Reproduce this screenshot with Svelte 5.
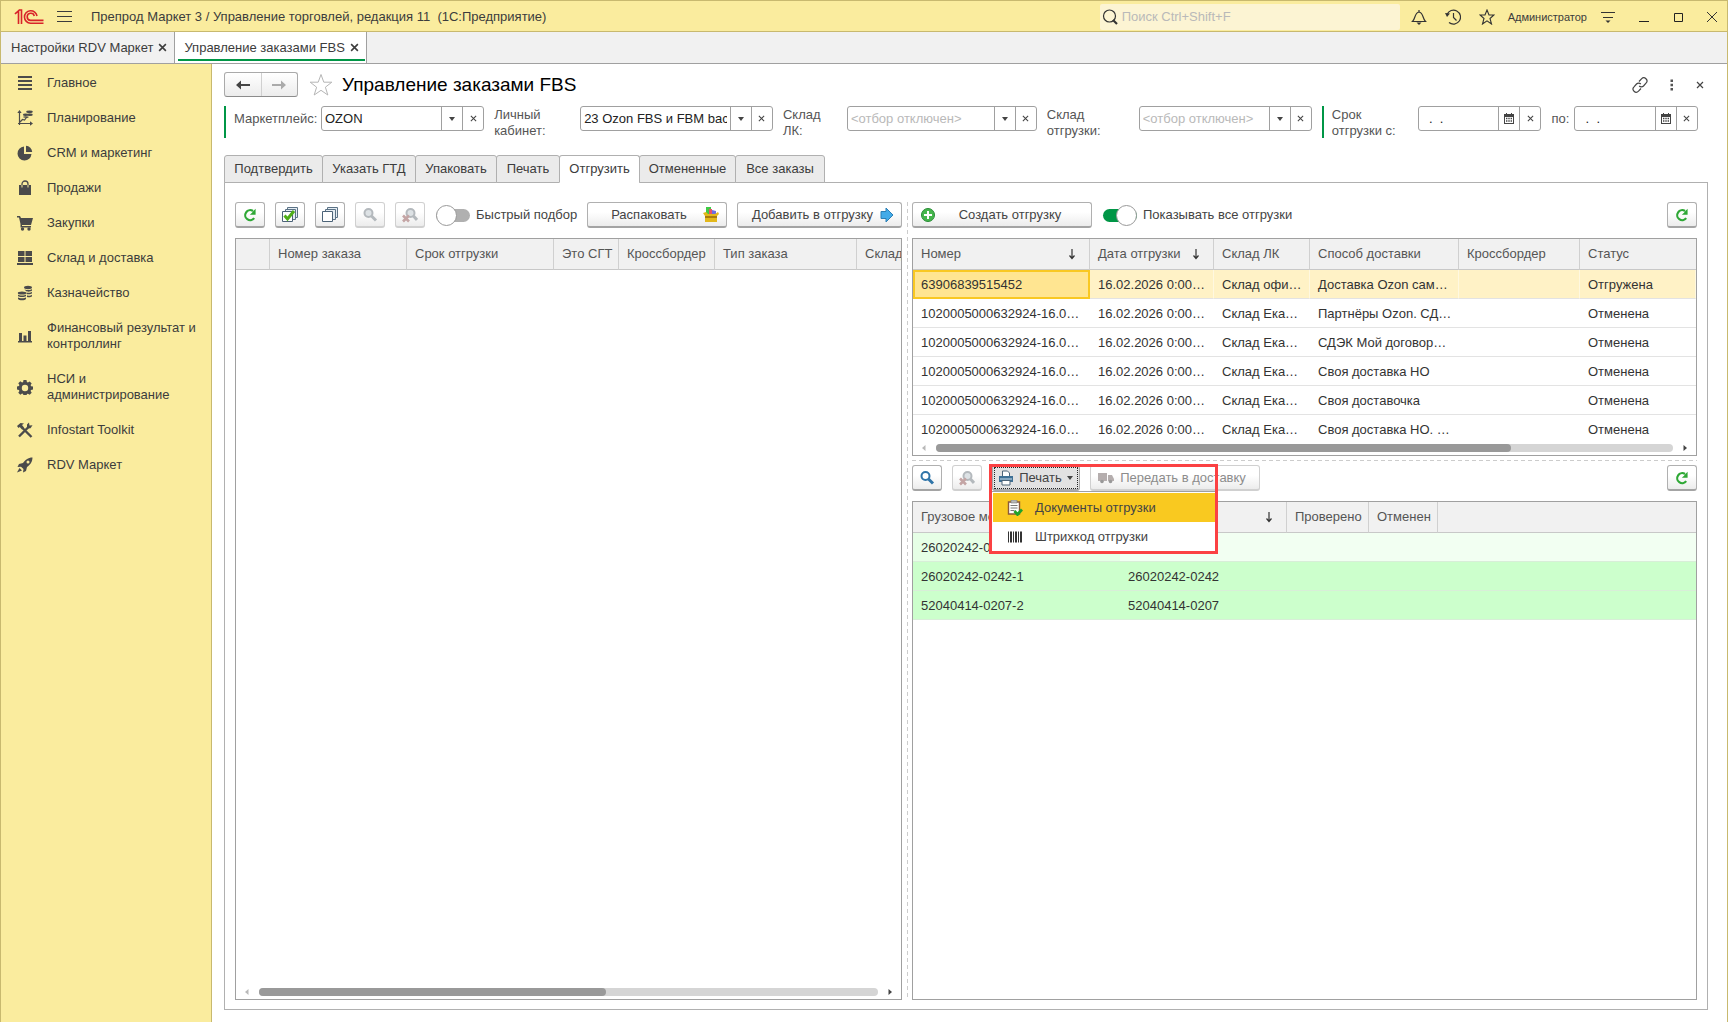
<script lang="ts">
  interface ISection {
    icon: string;
    title: string;
  }

  interface IColumn {
    title: string;
    width?: number;
    sort?: boolean;
  }

  const sections: ISection[] = [
    { icon: "list", title: "Главное" },
    { icon: "plan", title: "Планирование" },
    { icon: "pie", title: "CRM и маркетинг" },
    { icon: "bag", title: "Продажи" },
    { icon: "cart", title: "Закупки" },
    { icon: "store", title: "Склад и доставка" },
    { icon: "coins", title: "Казначейство" },
    { icon: "bars", title: "Финансовый результат и контроллинг" },
    { icon: "gear", title: "НСИ и администрирование" },
    { icon: "tools", title: "Infostart Toolkit" },
    { icon: "rocket", title: "RDV Маркет" },
  ];

  const pages = [
    { title: "Подтвердить", width: 99 },
    { title: "Указать ГТД", width: 94 },
    { title: "Упаковать", width: 82 },
    { title: "Печать", width: 64 },
    { title: "Отгрузить", width: 81 },
    { title: "Отмененные", width: 97 },
    { title: "Все заказы", width: 90 },
  ];

  const orderColumns: IColumn[] = [
    { title: "", width: 34 },
    { title: "Номер заказа", width: 137 },
    { title: "Срок отгрузки", width: 147 },
    { title: "Это СГТ", width: 65 },
    { title: "Кроссбордер", width: 96 },
    { title: "Тип заказа", width: 142 },
    { title: "Склад", width: 140 },
  ];

  const shipmentColumns: IColumn[] = [
    { title: "Номер", width: 177, sort: true },
    { title: "Дата отгрузки", width: 124, sort: true },
    { title: "Склад ЛК", width: 96 },
    { title: "Способ доставки", width: 149 },
    { title: "Кроссбордер", width: 121 },
    { title: "Статус" },
  ];

  const longNumber = "1020005000632924-16.0…";
  const date = "16.02.2026 0:00…";
  const shipments = [
    ["63906839515452", date, "Склад офи…", "Доставка Ozon сам…", "", "Отгружена"],
    [longNumber, date, "Склад Ека…", "Партнёры Ozon. СД…", "", "Отменена"],
    [longNumber, date, "Склад Ека…", "СДЭК Мой договор…", "", "Отменена"],
    [longNumber, date, "Склад Ека…", "Своя доставка НО", "", "Отменена"],
    [longNumber, date, "Склад Ека…", "Своя доставочка", "", "Отменена"],
    [longNumber, date, "Склад Ека…", "Своя доставка НО. …", "", "Отменена"],
  ];

  const cargoColumns: IColumn[] = [
    { title: "Грузовое место", width: 207 },
    { title: "", width: 167, sort: true },
    { title: "Проверено", width: 82 },
    { title: "Отменен", width: 69 },
    { title: "" },
  ];

  const cargo = [
    ["26020242-0242", "", "", "", ""],
    ["26020242-0242-1", "26020242-0242", "", "", ""],
    ["52040414-0207-2", "52040414-0207", "", "", ""],
  ];

  let activePage = $state("Отгрузить");
  let quickPick = $state(false);
  let showAll = $state(true);
  let menuOpen = $state(true);
  let marketplace = $state("OZON");
  let account = $state("23 Ozon FBS и FBM backup");
  let accountWarehouse = $state("");
  let shipWarehouse = $state("");
  let dateFrom = $state("  .  .");
  let dateTo = $state("  .  .");
</script>

{#snippet cross(size: number)}
  <svg width={size} height={size} viewBox="0 0 8 8"><path d="M1 1l6 6M7 1L1 7" fill="none" stroke="currentColor" stroke-width={size > 8 ? 1.4 : 1.2} /></svg>
{/snippet}

{#snippet refresh()}
  <svg width="16" height="16" viewBox="0 0 16 16">
    <path d="M12.2 11.2A5 5 0 1 1 11 4" fill="none" stroke="#2fa836" stroke-width="2.2" />
    <path d="M13.6 1.8v6H7.8l2.2-2.1 1.6-2z" fill="#2fa836" />
  </svg>
{/snippet}

{#snippet magnifier(color: string, cancel: boolean)}
  <svg width="16" height="16" viewBox="0 0 16 16">
    <circle cx={cancel ? 8.5 : 6.5} cy="6" r="4" fill={color === "#b4b9bd" ? "#dde2e5" : "#fff"} stroke={color} stroke-width="2" />
    <path d={cancel ? "M11.5 9l3.5 4" : "M9.5 9l4.5 4.5"} stroke={color} stroke-width="3" />
    {#if cancel}
      <path d="M1 8.500l6 6M7 8.500l-6 6" stroke="#c4a5a5" stroke-width="2.6" />
    {/if}
  </svg>
{/snippet}

{#snippet sectionIcon(name: string)}
  <svg class="section_icon" width="16" height="16" viewBox="0 0 16 16" fill="#4b4b4b">
    {#if name === "list"}
      <path d="M1 1h14v2H1zM1 5h14v2H1zM1 9h14v2H1zM1 13h14v2H1z" />
    {:else if name === "plan"}
      <path d="M2.500 15V2M1 13.500h13M3 12l2.500-2.500 2 .5 2-2.500 2-.5" fill="none" stroke="#4b4b4b" stroke-width="1.200" />
      <path d="M2.500 0l2.200 3H.3zM16 13.500l-3 2.200v-4.400z" />
      <ellipse cx="12.500" cy="1.800" rx="3.300" ry="1.400" />
      <ellipse cx="12.800" cy="4.800" rx="3" ry="1.200" />
      <ellipse cx="8.500" cy="4.800" rx="2.600" ry="1.200" />
      <ellipse cx="8.500" cy="7" rx="2.400" ry=".8" />
    {:else if name === "pie"}
      <path d="M7 1.500V9h7.500A7 7 0 1 1 7 1.500z" />
      <path d="M9 .8A6.500 6.500 0 0 1 15.200 7H9z" />
    {:else if name === "bag"}
      <path d="M2 5h12v10H2z" />
      <path d="M5 8V4a3 3 0 0 1 6 0v4" fill="none" stroke="#4b4b4b" stroke-width="1.300" />
      <path d="M5 5v2.500M11 5v2.500" stroke="#faec9e" stroke-width="1" />
    {:else if name === "cart"}
      <path d="M0 1h3l1 2h12l-2 7H5v1h9v1.500H3.500V9L2 2.500H0z" />
      <circle cx="5.500" cy="14" r="1.700" />
      <circle cx="12" cy="14" r="1.700" />
    {:else if name === "store"}
      <path d="M1 1h6.500v5H1zM8.500 1H15v5H8.500zM1 7h6.500v5H1zM8.500 7H15v5H8.500zM0 13h16v2H0z" />
    {:else if name === "coins"}
      <ellipse cx="11" cy="2.500" rx="4" ry="1.700" />
      <path d="M7 4c1 1.400 7 1.400 8 0v1.500c-1 1.400-5 1.400-6 .6zM9.500 7.500c2 .6 4.500.3 5.500-.7v1.500c-1 1-3.500 1.200-5.500.8zM10 10.500c2 .4 4 0 5-.8v1.500c-1 1-3 1.200-5 .8z" />
      <ellipse cx="5" cy="8" rx="4.200" ry="1.500" />
      <path d="M1 9.500c1 1.400 7 1.400 8 0V11c-1 1.400-7 1.400-8 0zM1 12.300c1 1.400 7 1.400 8 0v1.600c-1 1.800-7 1.800-8 0z" />
    {:else if name === "bars"}
      <path d="M1 13h14v1.500H1zM2 5h3v8H2zM6.500 7.500h3V13h-3zM11 3h3v10h-3z" />
    {:else if name === "gear"}
      <path fill-rule="evenodd" d="M6.500 1h3l.4 2 1 .5 1.800-1.100 2 2-1.100 1.700.5 1.100 1.900.4v3l-2 .4-.4 1 1.100 1.800-2 2-1.800-1.100-1 .4-.4 1.900h-3l-.4-2-1-.4-1.800 1.100-2-2L2.400 12l-.5-1L0 10.500v-3l2-.4.4-1-1.100-1.800 2-2L5.100 3.500l1-.5zM8 5.800a3.200 3.200 0 1 0 0 6.400 3.200 3.200 0 0 0 0-6.400z" />
    {:else if name === "tools"}
      <path d="M2 14.500l9.500-9.500M5.500 6l9 9" stroke="#4b4b4b" stroke-width="2.400" />
      <path d="M10 2.500l2-2 .5 3 3-.3-2 3-3.500.3zM0 4l3.500-3 3.500.5-2 1.500 2 2.500-2 2-2.300-2.500L1.500 6z" />
    {:else}
      <path d="M15.500.5C11 .5 8 3 6 6L2 7 .5 10l3.500-.3L6.500 12 6 15.500 9 14l1-4c3-2 5.500-5 5.500-9.500z" />
      <path d="M0 15.500L2.500 11 5 13.500z" />
      <circle cx="11" cy="5" r="1.500" fill="#faec9e" />
    {/if}
  </svg>
{/snippet}

{#snippet headCells(columns: IColumn[])}
  <colgroup>
    {#each columns as column}
      <col style={column.width ? `width: ${column.width}px` : ""} />
    {/each}
  </colgroup>
  <thead>
    <tr>
      {#each columns as column}
        <th>
          <div class="head">
            <span>{column.title}</span>
            {#if column.sort}
              <svg width="8" height="12" viewBox="0 0 8 12"><path d="M4 1v9M1.500 7.500L4 10.500l2.500-3" fill="none" stroke="#333" stroke-width="1.200" /></svg>
            {/if}
          </div>
        </th>
      {/each}
    </tr>
  </thead>
{/snippet}

{#snippet scrollbar(part: number)}
  <div class="scroll">
    <svg width="5" height="8" viewBox="0 0 5 8"><path d="M4.500 1v6L1 4z" fill="#b9b9b9" /></svg>
    <div class="scroll_track"><div class="scroll_thumb" style="width: {part}%"></div></div>
    <svg width="5" height="8" viewBox="0 0 5 8"><path d="M.5 1v6L4 4z" fill="#444" /></svg>
  </div>
{/snippet}

{#snippet comboButtons(name: string)}
  <button aria-label="Выбрать: {name}">
    <svg width="6" height="4" viewBox="0 0 6 4"><path d="M0 0h6L3 4z" fill="#444" /></svg>
  </button>
  <button aria-label="Очистить: {name}">{@render cross(7)}</button>
{/snippet}

{#snippet dateButtons(name: string)}
  <button aria-label="Календарь: {name}">
    <svg width="10" height="11" viewBox="0 0 10 11">
      <path fill="#444" fill-rule="evenodd" d="M0 1h2V0h1v1h4V0h1v1h2v10H0zM1 4v6h8V4z" />
      <path d="M2 5.500h6M2 8h6" stroke="#444" stroke-width="1.300" stroke-dasharray="1.400 .9" />
    </svg>
  </button>
  <button aria-label="Очистить: {name}">{@render cross(7)}</button>
{/snippet}

<div class="app">
  <header class="titlebar">
    <svg class="logo" width="30" height="16" viewBox="0 0 30 16" fill="none" stroke="#d8232a" stroke-width="1.600">
      <path d="M1 5l3.500-3.200V15M7.500 15V1H5.500L1 4.800" />
      <path d="M23 7A6.300 6.300 0 1 0 16.500 14.300H29.500M20.300 7A3.600 3.600 0 1 0 16.500 11.400H29.500" />
    </svg>
    <button class="plain menuButton" aria-label="Меню">
      <svg width="15" height="13" viewBox="0 0 15 13"><path d="M0 1.500h15M0 6.500h15M0 11.500h15" stroke="#3c3c3c" /></svg>
    </button>
    <span class="appTitle">Препрод Маркет 3 / Управление торговлей, редакция 11&nbsp; (1С:Предприятие)</span>
    <label class="search">
      <svg width="16" height="16" viewBox="0 0 16 16"><circle cx="7.500" cy="7" r="6" fill="none" stroke="#333" stroke-width="1.200" /><path d="M11 11l4 4" stroke="#333" stroke-width="2.200" /></svg>
      <input type="text" placeholder="Поиск Ctrl+Shift+F" />
    </label>
    <div class="tools">
      <button class="plain" aria-label="Уведомления">
        <svg width="16" height="16" viewBox="0 0 16 16"><path d="M1.500 12.500c3-2.500 2-9 6.500-9.500 4.500.5 3.500 7 6.500 9.500zM8 3V1" fill="none" stroke="#333" stroke-width="1.200" /><path d="M5.500 13.500h5L8 16z" fill="#333" /></svg>
      </button>
      <button class="plain" aria-label="История">
        <svg width="16" height="16" viewBox="0 0 16 16"><path d="M2 5.500A7 7 0 1 1 4 13.500M8.500 4v4.500l3 3" fill="none" stroke="#333" stroke-width="1.200" /><path d="M0 4l5 .5L2 8z" fill="#333" /></svg>
      </button>
      <button class="plain" aria-label="Избранное">
        <svg width="16" height="16" viewBox="0 0 16 16"><path d="M8 1l2 5h5l-4 3.500 1.500 5.500L8 11.800 3.500 15 5 9.500 1 6h5z" fill="none" stroke="#333" stroke-width="1.100" /></svg>
      </button>
    </div>
    <span class="user">Администратор</span>
    <div class="windowButtons">
      <button class="plain" aria-label="Настройки">
        <svg width="14" height="14" viewBox="0 0 14 14"><path d="M0 2.500h14M2 7.500h10" stroke="#333" stroke-width="1.200" /><path d="M4.500 10.500h5L7 13z" fill="#333" /></svg>
      </button>
      <button class="plain" aria-label="Свернуть">
        <svg width="10" height="10" viewBox="0 0 10 10"><path d="M0 9.500h10" stroke="#222" /></svg>
      </button>
      <button class="plain" aria-label="Развернуть">
        <svg width="10" height="10" viewBox="0 0 10 10"><path d="M1.500 1.500h8v8h-8z" fill="none" stroke="#222" /></svg>
      </button>
      <button class="plain" aria-label="Закрыть">
        <svg width="10" height="10" viewBox="0 0 10 10"><path d="M0 0l10 10M10 0L0 10" stroke="#333" /></svg>
      </button>
    </div>
  </header>

  <div class="windowTabs">
    <div class="windowTab">
      <span>Настройки RDV Маркет</span>
      <button class="plain" aria-label="Закрыть вкладку">{@render cross(9)}</button>
    </div>
    <div class="windowTab current">
      <span>Управление заказами FBS</span>
      <button class="plain" aria-label="Закрыть вкладку">{@render cross(9)}</button>
    </div>
  </div>

  <div class="body">
    <nav class="sidebar">
      {#each sections as section}
        <a class="section" href="#{section.icon}">
          {@render sectionIcon(section.icon)}
          <span>{section.title}</span>
        </a>
      {/each}
    </nav>

    <main class="form">
      <div class="formHeader">
        <div class="history">
          <button aria-label="Назад">
            <svg width="14" height="10" viewBox="0 0 14 10"><path d="M0 5l5-4.500V4h9v2H5v3.500z" fill="#444" /></svg>
          </button>
          <button aria-label="Вперед">
            <svg width="14" height="10" viewBox="0 0 14 10"><path d="M14 5L9 .5V4H0v2h9v3.500z" fill="#aaa" /></svg>
          </button>
        </div>
        <svg class="star" width="24" height="24" viewBox="0 0 24 24"><path d="M12 1.500l2.800 7.700h8l-6.400 5 2.400 7.800-6.800-4.700L5.200 22l2.400-7.800-6.400-5h8z" fill="none" stroke="#b5b5b5" /></svg>
        <h1>Управление заказами FBS</h1>
        <div class="formTools">
          <button class="plain" aria-label="Ссылка">
            <svg width="16" height="16" viewBox="0 0 16 16"><path d="M7 4.500l2.500-2.700a3 3 0 0 1 4.500 4.400L11.500 9a3 3 0 0 1-4.300 0M9 11.500l-2.500 2.700A3 3 0 0 1 2 9.800L4.500 7a3 3 0 0 1 4.300 0" fill="none" stroke="#444" stroke-width="1.200" /></svg>
          </button>
          <button class="plain" aria-label="Еще">
            <svg width="4" height="12" viewBox="0 0 4 12"><path d="M.5 .5h2.500v2.500H.5zM.5 4.800h2.500v2.500H.5zM.5 9h2.500v2.500H.5z" fill="#555" /></svg>
          </button>
          <button class="plain" aria-label="Закрыть">{@render cross(8)}</button>
        </div>
      </div>

      <div class="filters">
        <label class="marked market" for="market">Маркетплейс:</label>
        <div class="field field_market">
          <input id="market" type="text" bind:value={marketplace} />
          {@render comboButtons("Маркетплейс")}
        </div>
        <label class="twoLines account" for="account">Личный кабинет:</label>
        <div class="field field_account">
          <input id="account" type="text" bind:value={account} />
          {@render comboButtons("Личный кабинет")}
        </div>
        <label class="twoLines warehouse" for="warehouse">Склад ЛК:</label>
        <div class="field field_warehouse">
          <input id="warehouse" type="text" placeholder="<отбор отключен>" bind:value={accountWarehouse} />
          {@render comboButtons("Склад ЛК")}
        </div>
        <label class="twoLines ship" for="ship">Склад отгрузки:</label>
        <div class="field field_ship">
          <input id="ship" type="text" placeholder="<отбор отключен>" bind:value={shipWarehouse} />
          {@render comboButtons("Склад отгрузки")}
        </div>
        <label class="twoLines marked from" for="from">Срок отгрузки с:</label>
        <div class="field field_date">
          <input id="from" type="text" bind:value={dateFrom} />
          {@render dateButtons("Срок отгрузки с")}
        </div>
        <label class="to" for="to">по:</label>
        <div class="field field_date">
          <input id="to" type="text" bind:value={dateTo} />
          {@render dateButtons("по")}
        </div>
      </div>

      <div class="pages">
        {#each pages as page}
          <button
            class={page.title === activePage ? "page active" : "page"}
            style="width: {page.width}px"
            onclick={() => (activePage = page.title)}
          >
            {page.title}
          </button>
        {/each}
      </div>

      <div class="panel">
        <section class="pane">
          <div class="toolbar">
            <button class="btn square" aria-label="Обновить">{@render refresh()}</button>
            <button class="btn square" aria-label="Отметить все">
              <svg width="16" height="16" viewBox="0 0 16 16">
                <path d="M5.500 3V.5h10v10H13M3.500 5V2.500h10v10H11" fill="#e5edf3" stroke="#5b7286" />
                <path d="M.5 4.500h10v10H.5z" fill="#fff" stroke="#4c6378" />
                <path d="M2.500 8.500l3 3.500 6.500-8" fill="none" stroke="#4fae17" stroke-width="3" />
              </svg>
            </button>
            <button class="btn square" aria-label="Снять отметки">
              <svg width="16" height="16" viewBox="0 0 16 16">
                <path d="M5.500 3V.5h10v10H13M3.500 5V2.500h10v10H11" fill="#e5edf3" stroke="#5b7286" />
                <path d="M.5 4.500h10v10H.5z" fill="#fff" stroke="#4c6378" />
              </svg>
            </button>
            <button class="btn square" disabled aria-label="Найти">{@render magnifier("#b4b9bd", false)}</button>
            <button class="btn square" disabled aria-label="Отменить поиск">{@render magnifier("#b4b9bd", true)}</button>
            <label class="switch grow">
              <input type="checkbox" bind:checked={quickPick} />
              <span>Быстрый подбор</span>
            </label>
            <button class="btn unpack">
              <span>Распаковать</span>
              <svg width="16" height="16" viewBox="0 0 16 16">
                <path d="M3 0h5v7H3z" fill="#3fca45" /><path d="M6 2h3v6H6z" fill="#e5536b" /><path d="M9 3l4 1v4H9z" fill="#6d6ee0" />
                <path d="M0 6l3-1 2 2h7l3-2 1 2-2 2v6H2V9z" fill="#e3b81b" /><path d="M2 9h12v2H2z" fill="#a97b0c" />
              </svg>
            </button>
            <button class="btn add">
              <span>Добавить в отгрузку</span>
              <svg width="14" height="16" viewBox="0 0 14 16"><path d="M1 4.500h5V1l7 7-7 7v-3.500H1z" fill="#43abe8" stroke="#2b7fb5" /></svg>
            </button>
          </div>
          <div class="grid">
            <table class="orders">
              {@render headCells(orderColumns)}
              <tbody></tbody>
            </table>
            <div class="space"></div>
            {@render scrollbar(56)}
          </div>
        </section>

        <div class="splitter"></div>

        <section class="pane">
          <div class="toolbar">
            <button class="btn create">
              <svg width="16" height="16" viewBox="0 0 16 16"><circle cx="8" cy="8" r="6.500" fill="#45b64c" stroke="#278c35" /><path d="M8 4v8M4 8h8" stroke="#fff" stroke-width="2" /></svg>
              <span>Создать отгрузку</span>
            </button>
            <label class="switch grow">
              <input type="checkbox" bind:checked={showAll} />
              <span>Показывать все отгрузки</span>
            </label>
            <button class="btn square" aria-label="Обновить отгрузки">{@render refresh()}</button>
          </div>
          <div class="grid shipments">
            <table>
              {@render headCells(shipmentColumns)}
              <tbody>
                {#each shipments as row, index (index)}
                  <tr class={index === 0 ? "selected" : ""}>
                    {#each row as cell}
                      <td>{cell}</td>
                    {/each}
                  </tr>
                {/each}
              </tbody>
            </table>
            {@render scrollbar(78)}
          </div>
          <div class="rowSplitter"></div>
          <div class="toolbar">
            <button class="btn square" aria-label="Найти место">{@render magnifier("#2f74a8", false)}</button>
            <button class="btn square" disabled aria-label="Отменить поиск места">{@render magnifier("#b4b9bd", true)}</button>
            <div class="print">
              <button class="btn pressed" onclick={() => (menuOpen = !menuOpen)}>
                <svg width="16" height="16" viewBox="0 0 16 16">
                  <path d="M4.500 7V1h5l2 2v4" fill="#fff" stroke="#4d6478" />
                  <path d="M1 6h14v6H1z" fill="#3e7095" /><path d="M2 9h12" stroke="#cfe0ec" />
                  <path d="M4 10.500h8V15H4z" fill="#fff" stroke="#4d6478" />
                </svg>
                <span>Печать</span>
                <svg width="6" height="4" viewBox="0 0 6 4"><path d="M0 0h6L3 4z" fill="#444" /></svg>
              </button>
              {#if menuOpen}
                <div class="menu">
                  <button class="menuItem hovered">
                    <svg width="16" height="16" viewBox="0 0 16 16">
                      <path d="M1.500 2h11v12h-11z" fill="#fff" stroke="#8a5a3c" stroke-width="1.400" /><path d="M4 0h6v3H4z" fill="#b9b9b9" stroke="#777" stroke-width=".6" />
                      <path d="M3.500 5.500h7M3.500 8h7M3.500 10.500h4" stroke="#777" /><path d="M7.500 11l3 3.500L15 9.500" fill="none" stroke="#1fa32b" stroke-width="2.800" />
                    </svg>
                    <span>Документы отгрузки</span>
                  </button>
                  <button class="menuItem">
                    <svg width="16" height="16" viewBox="0 0 16 16"><path d="M1 2.500h1v11H1zM3 2.500h2v11H3zM6 2.500h1v11H6zM8 2.500h2v11H8zM11 2.500h1v11h-1zM13 2.500h2v11h-2z" fill="#333" /></svg>
                    <span>Штрихкод отгрузки</span>
                  </button>
                </div>
                <div class="highlight"></div>
              {/if}
            </div>
            <button class="btn deliver" disabled>
              <svg width="16" height="16" viewBox="0 0 16 16"><path d="M0 3h9v8H0zM10 5h4l2 4v2h-6z" fill="#b5aeae" /><circle cx="4" cy="11.500" r="1.800" fill="#999" /><circle cx="12.500" cy="11.500" r="1.800" fill="#999" /></svg>
              <span>Передать в доставку</span>
            </button>
            <div class="grow"></div>
            <button class="btn square" aria-label="Обновить места">{@render refresh()}</button>
          </div>
          <div class="grid">
            <table class="cargo">
              {@render headCells(cargoColumns)}
              <tbody>
                {#each cargo as row, index (index)}
                  <tr class={index === 0 ? "currentRow" : ""}>
                    {#each row as cell}
                      <td>{cell}</td>
                    {/each}
                  </tr>
                {/each}
              </tbody>
            </table>
          </div>
        </section>
      </div>
    </main>
  </div>
</div>

<style>
  :global(body) {
    background: #fff;
  }

  .app {
    display: flex;
    flex-direction: column;
    min-height: 100vh;
    box-sizing: border-box;
    border: 1px solid #c8b96f;
    border-bottom: none;
    font: 13px/16px "Liberation Sans", Arial, sans-serif;
    color: #3c3c3c;
  }

  .app :global(*) {
    box-sizing: border-box;
  }

  button,
  input {
    font: inherit;
    color: inherit;
  }

  svg {
    display: block;
    flex: none;
  }

  .plain {
    display: flex;
    align-items: center;
    justify-content: center;
    padding: 0;
    border: none;
    background: none;
    cursor: pointer;
  }

  .titlebar {
    display: flex;
    align-items: center;
    height: 31px;
    padding: 1px 10px 0 13px;
    border-bottom: 1px solid #c8b96f;
    background: #faec9e;
  }

  .menuButton {
    margin: 0 19px 0 13px;
  }

  .appTitle {
    flex: 1;
    white-space: nowrap;
  }

  .search {
    display: flex;
    align-items: center;
    gap: 4px;
    width: 300px;
    height: 26px;
    padding: 0 2px;
    border-radius: 2px;
    background: #fcf4d3;
  }

  .search input {
    flex: 1;
    min-width: 0;
    padding: 0;
    border: none;
    outline: none;
    background: none;
  }

  input::placeholder {
    color: #b9b9b9;
    opacity: 1;
  }

  .tools {
    display: flex;
    gap: 18px;
    margin: 0 13px 0 11px;
  }

  .user {
    font-size: 11px;
  }

  .windowButtons {
    display: flex;
    align-items: center;
    gap: 24px;
    margin-left: 14px;
  }

  .windowTabs {
    display: flex;
    height: 32px;
    border-bottom: 1px solid #a0a0a0;
    background: #f1f1f1;
  }

  .windowTab {
    display: flex;
    align-items: center;
    gap: 5px;
    padding: 0 7px 0 10px;
    border-right: 1px solid #a0a0a0;
    white-space: nowrap;
  }

  .current {
    padding: 0 7px 0 6px;
    border-left: 3px solid #fff;
    background: linear-gradient(#009646, #009646) 0 27px / 187px 2px no-repeat #fff;
  }

  .body {
    display: flex;
    flex: 1;
  }

  .sidebar {
    flex: none;
    width: 211px;
    padding-top: 2px;
    border-right: 1px solid #c8b96f;
    background: #faec9e;
  }

  .section {
    display: flex;
    align-items: center;
    gap: 14px;
    padding: 9px 12px 10px 16px;
    color: #3c3c3c;
    text-decoration: none;
  }

  .form {
    display: flex;
    flex-direction: column;
    flex: 1;
    min-width: 0;
    padding: 8px 19px 12px 12px;
  }

  .formHeader {
    display: flex;
    align-items: center;
    height: 25px;
    padding-right: 4px;
  }

  .history {
    display: flex;
    width: 74px;
    height: 25px;
    border: 1px solid #aaa;
    border-bottom-color: #8c8c8c;
    border-radius: 3px;
    background: linear-gradient(#fff, #ececec);
  }

  .history button {
    display: flex;
    flex: 1;
    align-items: center;
    justify-content: center;
    border: none;
    background: none;
  }

  .history button + button {
    border-left: 1px solid #d0d0d0;
  }

  .star {
    margin: 0 9px 0 11px;
  }

  h1 {
    flex: 1;
    margin: 0;
    font-size: 19px;
    line-height: 24px;
    font-weight: normal;
    color: #000;
  }

  .formTools {
    display: flex;
    align-items: center;
    gap: 22px;
    color: #444;
  }

  .filters {
    display: flex;
    align-items: flex-start;
    margin-top: 9px;
    padding-right: 10px;
    color: #555;
  }

  .filters label {
    flex: none;
    padding: 5px 0 0 10px;
  }

  .filters .twoLines {
    height: 32px;
    padding-top: 1px;
  }

  .filters .marked {
    height: 32px;
    border-left: 2px solid #009646;
    padding-left: 8px;
  }

  .filters .market {
    width: 97px;
  }

  .filters .account {
    width: 96px;
    padding-right: 30px;
  }

  .filters .warehouse {
    width: 74px;
    padding-right: 20px;
  }

  .filters .ship {
    width: 102px;
    padding-right: 20px;
  }

  .filters .from {
    width: 96px;
    margin-left: 10px;
    padding-right: 20px;
  }

  .filters .to {
    width: 33px;
  }

  .field {
    display: flex;
    height: 25px;
    min-width: 0;
    border: 1px solid #a0a0a0;
    border-radius: 3px;
    background: #fff;
  }

  .field input {
    flex: 1;
    width: 0;
    min-width: 0;
    margin-right: 3px;
    padding: 0 0 0 3px;
    border: none;
    outline: none;
    background: none;
    color: #222;
  }

  .field button {
    display: flex;
    align-items: center;
    justify-content: center;
    flex: none;
    width: 21px;
    padding: 0;
    border: none;
    border-left: 1px solid #a0a0a0;
    background: none;
    color: #444;
  }

  .field_market {
    flex: 163 1 0;
  }

  .field_account {
    flex: 193 1 0;
  }

  .field_warehouse {
    flex: 190 1 0;
  }

  .field_ship {
    flex: 173 1 0;
  }

  .field_date {
    flex: 123 1 0;
  }

  .pages {
    display: flex;
    position: relative;
    margin-top: 17px;
  }

  .page {
    height: 28px;
    margin-right: -1px;
    padding: 0;
    border: 1px solid #b0b0b0;
    border-radius: 3px 3px 0 0;
    background: #ebebeb;
    white-space: nowrap;
  }

  .active {
    border-bottom-color: #fff;
    background: #fff;
  }

  .panel {
    display: grid;
    flex: 1;
    grid-template-columns: minmax(0, 667fr) 10px minmax(0, 785fr);
    margin-top: -1px;
    padding: 19px 10px 9px;
    border: 1px solid #b0b0b0;
  }

  .pane {
    display: flex;
    flex-direction: column;
    min-width: 0;
  }

  .splitter {
    width: 1px;
    margin: 0 auto;
    background: repeating-linear-gradient(#ccc 0 4px, #fff 4px 7px);
  }

  .rowSplitter {
    height: 1px;
    margin: 4px 0;
    background: repeating-linear-gradient(90deg, #ccc 0 4px, #fff 4px 7px);
  }

  .toolbar {
    display: flex;
    align-items: center;
    gap: 10px;
    height: 26px;
    margin-bottom: 10px;
    color: #444;
  }

  .btn {
    display: flex;
    align-items: center;
    justify-content: center;
    flex: none;
    height: 26px;
    padding: 0 7px;
    border: 1px solid #b0b0b0;
    border-bottom: 2px solid #a4a4a4;
    border-radius: 3px;
    background: linear-gradient(#fff 40%, #ececec);
    white-space: nowrap;
  }

  .btn span {
    flex: 1;
    text-align: center;
  }

  .btn:disabled {
    border-color: #d0d0d0;
    color: #8c8c8c;
  }

  .square {
    width: 30px;
    padding: 0;
  }

  .unpack {
    width: 140px;
  }

  .add {
    width: 165px;
  }

  .create {
    width: 180px;
  }

  .deliver {
    width: 170px;
  }

  .grow {
    flex: 1;
  }

  .switch {
    display: flex;
    align-items: center;
    gap: 6px;
    min-width: 0;
    white-space: nowrap;
  }

  .switch input {
    display: flex;
    align-items: center;
    appearance: none;
    flex: none;
    width: 34px;
    height: 13px;
    margin: 0 0 0 1px;
    border-radius: 7px;
    background: #b0b0b0;
  }

  .switch input::before {
    content: "";
    width: 19px;
    height: 19px;
    flex: none;
    border: 1px solid #999;
    border-radius: 50%;
    background: #fff;
  }

  .switch input:checked {
    justify-content: flex-end;
    background: #009646;
  }

  .grid {
    display: flex;
    flex: 1;
    flex-direction: column;
    overflow: hidden;
    border: 1px solid #a0a0a0;
    background: #fff;
  }

  .shipments {
    flex: none;
  }

  .space {
    flex: 1;
  }

  table {
    width: 100%;
    table-layout: fixed;
    border-collapse: separate;
    border-spacing: 0;
  }

  .orders {
    width: 761px;
  }

  th {
    height: 31px;
    padding: 0 7px 0 8px;
    border-right: 1px solid #d0d0d0;
    border-bottom: 1px solid #c8c8c8;
    background: #f1f1f1;
    font-weight: normal;
    color: #555;
    text-align: left;
  }

  th:last-child {
    border-right: none;
  }

  .head {
    display: flex;
    align-items: center;
    white-space: nowrap;
  }

  .head span {
    flex: 1;
  }

  .head svg {
    margin-right: 6px;
  }

  td {
    height: 29px;
    padding: 1px 2px 0 8px;
    overflow: hidden;
    border-bottom: 1px solid #e3e3e3;
    color: #333;
    text-overflow: ellipsis;
    white-space: nowrap;
  }

  .shipments tr:last-child td {
    border-bottom-color: transparent;
  }

  .selected td {
    border-right: 1px solid #fff8e0;
    background: #fff2c6;
  }

  .selected td:first-child {
    padding: 0 2px 0 6px;
    border: 2px solid #f9c822;
    background: #ffe591;
  }

  .cargo td {
    border-bottom-color: #d8eed8;
    background: #ccffcc;
  }

  .cargo .currentRow td {
    background: #f2fff2;
  }

  .cargo .currentRow td:first-child {
    background: #e6ffe6;
  }

  .scroll {
    display: flex;
    align-items: center;
    gap: 10px;
    height: 11px;
    padding: 0 8px 3px;
  }

  .scroll_track {
    flex: 1;
    height: 8px;
    border-radius: 4px;
    background: #d5d5d5;
  }

  .scroll_thumb {
    height: 8px;
    border-radius: 4px;
    background: #999;
  }

  .print {
    position: relative;
    width: 88px;
  }

  .pressed {
    width: 88px;
    padding: 0 6px 0 5px;
    border-color: #a8a8a8;
    outline: 1px dotted #222;
    outline-offset: -3px;
    background: #e2e2e2;
  }

  .menu {
    position: absolute;
    z-index: 2;
    top: 26px;
    left: 0;
    width: 224px;
    padding: 1px;
    border-top: 1px solid #a0a0a0;
    background: #fff;
  }

  .menuItem {
    display: flex;
    align-items: center;
    gap: 12px;
    width: 100%;
    height: 29px;
    padding: 0 14px;
    border: none;
    background: none;
    text-align: left;
    white-space: nowrap;
  }

  .hovered {
    background: #f9c920;
  }

  .highlight {
    position: absolute;
    z-index: 3;
    top: -1px;
    left: -3px;
    width: 229px;
    height: 90px;
    border: 3px solid #fb4143;
    pointer-events: none;
  }
</style>
